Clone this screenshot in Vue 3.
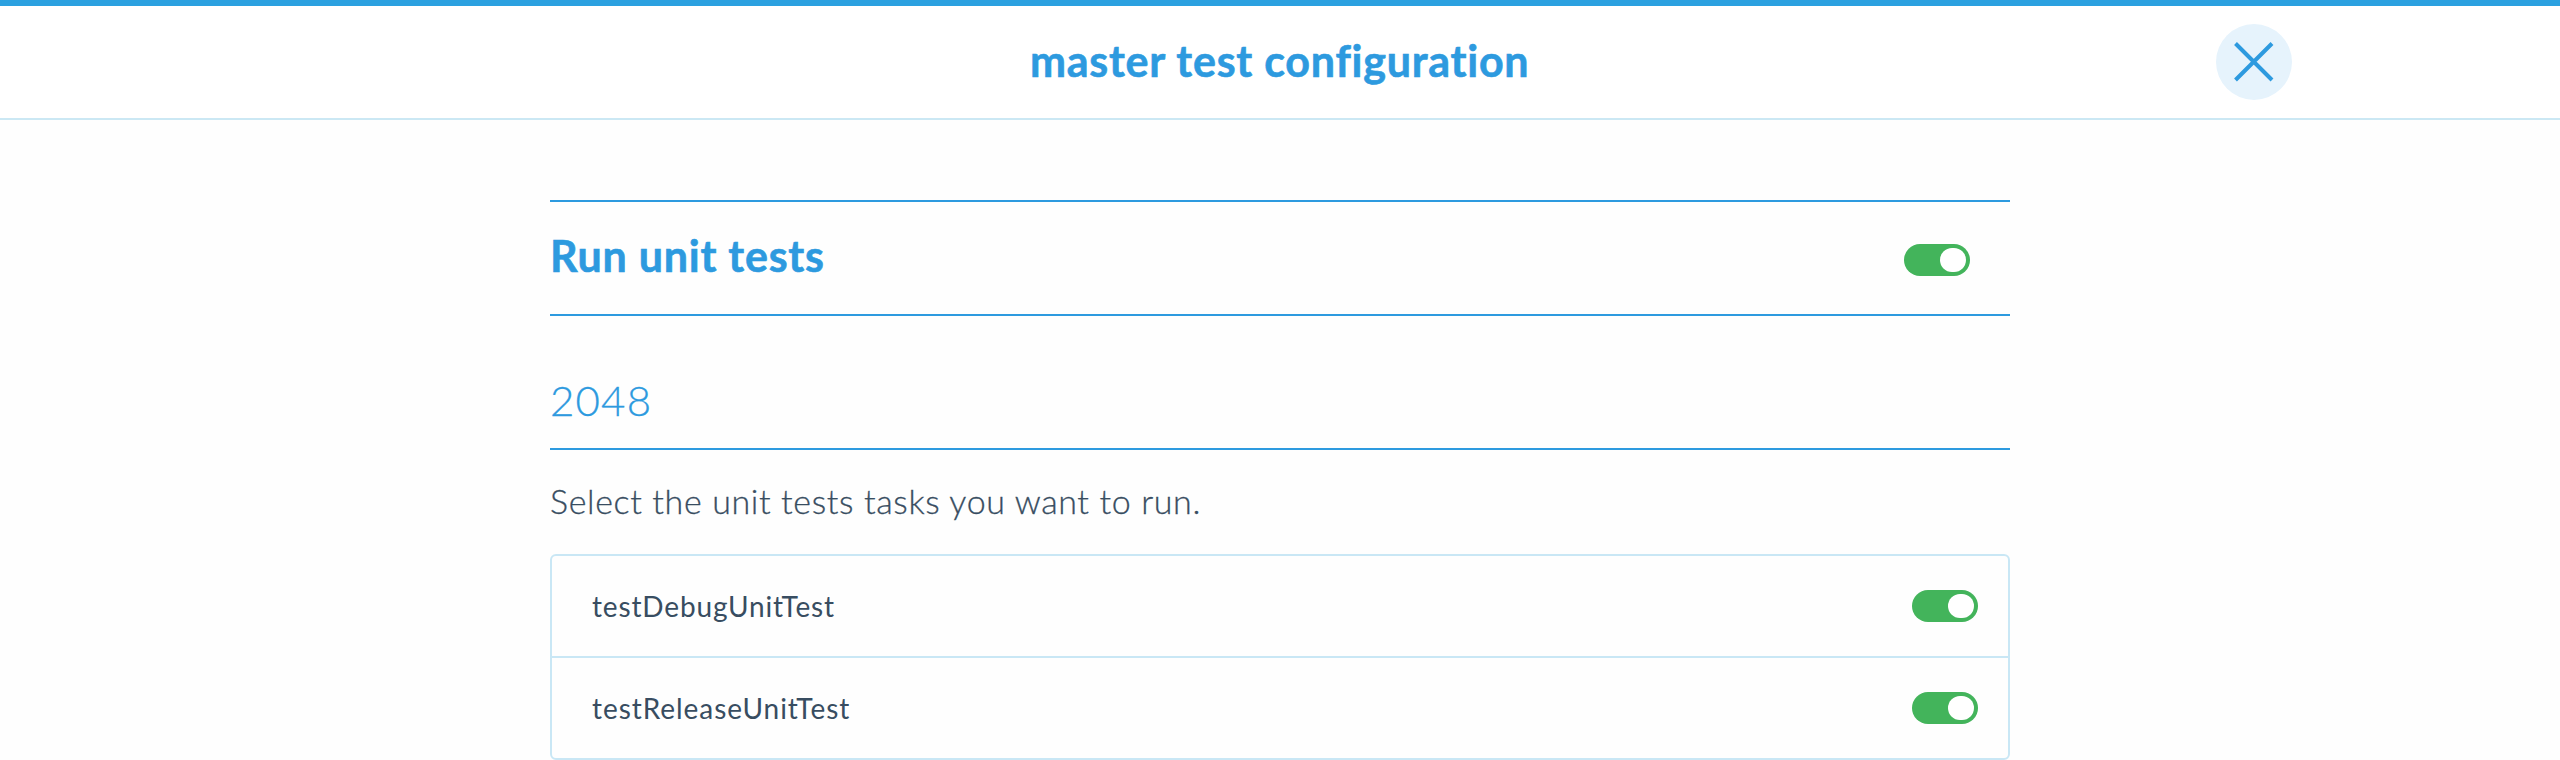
<script setup>
import { ref } from 'vue'

const runAll = ref(true)
const tasks = ref([
  { name: 'testDebugUnitTest', kind: 'debug', enabled: true },
  { name: 'testReleaseUnitTest', kind: 'release', enabled: true },
])
</script>

<template>
  <div class="page">
    <header class="header">
      <h1 class="title">master test configuration</h1>
      <button class="close" aria-label="Close">
        <svg viewBox="0 0 76 76" width="76" height="76">
          <path d="M19.5 19.5 L56 56 M56 19.5 L19.5 56" fill="none" stroke="#2d9adf" stroke-width="4" />
        </svg>
      </button>
    </header>

    <main class="content">
      <section class="run">
        <h2 class="run-title">Run unit tests</h2>
        <button class="toggle" :class="{ on: runAll }" aria-label="Run unit tests" @click="runAll = !runAll">
          <span class="knob"></span>
        </button>
      </section>

      <h3 class="project"><span class="project-name">2048</span></h3>
      <p class="hint">Select the unit tests tasks you want to run.</p>

      <ul class="tasks">
        <li v-for="task in tasks" :key="task.name" class="task">
          <span class="task-name" :class="task.kind">{{ task.name }}</span>
          <button class="toggle" :class="{ on: task.enabled }" :aria-label="task.name" @click="task.enabled = !task.enabled">
            <span class="knob"></span>
          </button>
        </li>
      </ul>
    </main>
  </div>
</template>

<style>
body {
  margin: 0;
  background: #fefefe;
}
</style>

<style scoped>
.page {
  box-sizing: border-box;
  height: 760px;
  overflow: hidden;
  border-top: 6px solid #2ba1e0;
  background: #fefefe;
  font-family: Lato, "Open Sans", sans-serif;
  font-variant-ligatures: none;
  color: #384d61;
}
h1, h2, h3, p, ul {
  margin: 0;
  padding: 0;
  white-space: nowrap;
}
button {
  border: 0;
  padding: 0;
  cursor: pointer;
}
.header {
  box-sizing: border-box;
  height: 114px;
  display: grid;
  grid-template-columns: 1030px 1fr 344px;
  align-items: center;
  border-bottom: 2px solid #cbe8f4;
  background: #fff;
}
.title {
  padding-bottom: 3px;
  font-size: 43px;
  line-height: 52px;
  font-weight: 700;
  letter-spacing: 0.75px;
  -webkit-text-stroke: 0.6px #2d9adf;
  color: #2d9adf;
  grid-column: 2;
}
.close {
  width: 76px;
  height: 76px;
  border-radius: 50%;
  background: #e6f3fc;
}
.close svg {
  display: block;
}
.content {
  width: 1460px;
  margin: 80px auto 0;
}
.run {
  box-sizing: border-box;
  height: 116px;
  padding-right: 40px;
  display: flex;
  align-items: center;
  justify-content: space-between;
  border-top: 2px solid #2d9adf;
  border-bottom: 2px solid #2d9adf;
}
.run .toggle {
  margin-top: 4px;
}
.run-title {
  padding-bottom: 4px;
  font-size: 43px;
  line-height: 52px;
  font-weight: 700;
  letter-spacing: 0.75px;
  -webkit-text-stroke: 0.6px #2d9adf;
  color: #2d9adf;
}
.project {
  box-sizing: border-box;
  height: 134px;
  padding-top: 58px;
  border-bottom: 2px solid #2d9adf;
  font-size: 42px;
  line-height: 52px;
  font-weight: 300;
  letter-spacing: 1.2px;
  -webkit-text-stroke: 0.3px #2d9adf;
  color: #2d9adf;
}
.hint {
  padding-top: 31px;
  height: 73px;
  font-size: 34px;
  line-height: 40px;
  font-weight: 300;
  letter-spacing: 0.63px;
  -webkit-text-stroke: 0.3px #384d61;
}
.tasks {
  box-sizing: border-box;
  height: 206px;
  list-style: none;
  border: 2px solid #c9e7f5;
  border-radius: 6px;
}
.task {
  height: 100px;
  padding: 0 30px 0 40px;
  display: flex;
  align-items: center;
  justify-content: space-between;
}
.task + .task {
  border-top: 2px solid #c9e7f5;
}
.task-name {
  font-size: 28px;
  line-height: 34px;
  letter-spacing: 0.85px;
}
.task-name.release {
  letter-spacing: 0.95px;
}
.toggle {
  width: 66px;
  height: 32px;
  padding: 4px;
  display: flex;
  border-radius: 16px;
  background: #c4cdd4;
}
.toggle.on {
  justify-content: flex-end;
  background: #43b45b;
}
.knob {
  width: 26px;
  height: 24px;
  border-radius: 12px;
  background: #fff;
}
</style>
